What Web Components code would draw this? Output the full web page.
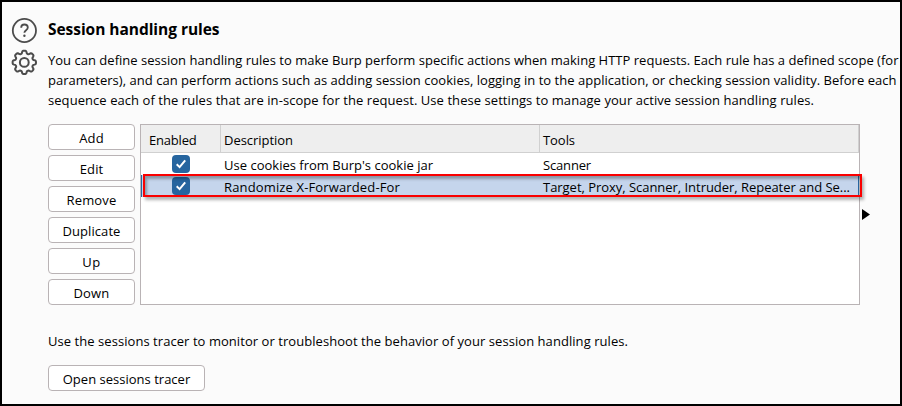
<!DOCTYPE html>
<html lang="en">
<head>
<meta charset="utf-8">
<title>Session handling rules</title>
<style>
html,body{margin:0;height:100%;overflow:hidden}
body{font-family:"Open Sans","Noto Sans",sans-serif;font-size:13px;color:#000}
</style>
</head>
<body>
<settings-panel></settings-panel>
<script>
function define(name, html, setup) {
  customElements.define(name, class extends HTMLElement {
    connectedCallback() {
      if (this.shadowRoot) return;
      const root = this.attachShadow({ mode: 'open' });
      const t = document.createElement('template');
      t.innerHTML = html;
      root.append(t.content.cloneNode(true));
      if (setup) setup(this, root);
    }
  });
}

/* One line of text, tracked so that it fills the width given in "w". */
define('text-line', `
<style>
:host{display:block;white-space:nowrap;line-height:20px}
span{display:inline-block;white-space:pre}
</style><span><slot></slot></span>`, (el, root) => {
  const span = root.querySelector('span');
  const w = +el.getAttribute('w');
  const n = el.textContent.length;
  const extra = (w - span.getBoundingClientRect().width) / n;
  span.style.letterSpacing = extra.toFixed(4) + 'px';
});

define('push-button', `
<style>
:host{display:flex;justify-content:center;box-sizing:border-box;height:26px;padding-top:3px;background:#fff;border:1px solid #b9b3b5;border-radius:4px}
</style><slot></slot>`);

define('check-box', `
<style>:host{display:block;width:18px;height:18px}svg{display:block}</style>
<svg width="18" height="18" viewBox="0 0 18 18"><rect width="18" height="18" rx="4" fill="#26659f"/><path d="M4.7 9.3 7.6 12.1 13.2 5.3" fill="none" stroke="#fff" stroke-width="2"/></svg>`);

define('help-icon', `
<style>:host{display:block;width:26px;height:26px}svg{display:block}</style>
<svg width="26" height="26" viewBox="0 0 26 26" fill="none" stroke="#4c4c4c"><circle cx="13.4" cy="12.5" r="11.6" stroke-width="1.8"/><path d="M10.2 9.8C10.2 7.6 11.5 6.5 13.4 6.5s3.4 1.2 3.4 3.1c0 2.7-3.4 2.6-3.4 5.2" stroke-width="1.8"/><circle cx="13.4" cy="17.8" r="1.2" fill="#4c4c4c" stroke="none"/></svg>`);

define('gear-icon', `
<style>:host{display:block;width:26px;height:26px}svg{display:block;overflow:visible}</style>
<svg width="26" height="26" viewBox="0 0 26 26" fill="none" stroke="#4c4c4c" stroke-width="2" stroke-linejoin="round"><path/><circle cx="13.3" cy="12.4" r="4.4"/></svg>`, (el, root) => {
  /* Eight rounded teeth: the radius swings between root and tip. */
  const pts = [];
  for (let d = 0; d < 360; d += 3) {
    const a = d * Math.PI / 180;
    const r = 10.3 + 1.35 * Math.tanh(2 * (Math.cos(8 * a) + 0.2)) / Math.tanh(2);
    pts.push((13.3 + r * Math.cos(a)).toFixed(2) + ' ' + (12.4 + r * Math.sin(a)).toFixed(2));
  }
  root.querySelector('path').setAttribute('d', 'M' + pts.join('L') + 'Z');
});

define('rule-row', `
<style>
:host{display:grid;grid-template-columns:80px 319px 1fr;height:22px;box-sizing:border-box;background:#fff}
:host([selected]){background:#c5d5ec;box-shadow:inset 1px 0 #26659f,inset -1px 0 #26659f}
.c{padding:2px 0 0 31px}
.t{padding:2px 0 0 3px}
</style>
<div class="c"><check-box></check-box></div>
<div class="t"><slot name="description"></slot></div>
<div class="t"><slot name="tools"></slot></div>`);

define('rules-table', `
<style>
:host{display:block;position:relative;box-sizing:border-box;width:720px;height:181px;background:#fff;border:1px solid #b9b3b5}
.head{display:grid;grid-template-columns:80px 319px 1fr;height:28px;box-sizing:border-box;background:#eee;border-bottom:1px solid #d0d0d0;width:718px}
.head div{border-right:1px solid #d0d0d0;padding:5px 0 0 3px;box-sizing:border-box}
.head div:first-child{padding-left:8px}
.mark{position:absolute;left:2px;top:49px;width:719px;height:23px;box-sizing:border-box;border:2px solid #fa0000;box-shadow:2px 3px 3px rgba(0,0,0,.3),inset 2px 3px 3px rgba(0,0,0,.3)}
</style>
<div class="head"><div><text-line w="47.5">Enabled</text-line></div><div><text-line w="69">Description</text-line></div><div><text-line w="32">Tools</text-line></div></div>
<slot></slot>
<div class="mark"></div>`);

define('settings-panel', `
<style>
:host{display:block;box-sizing:border-box;width:902px;height:406px;border:2px solid #000;background:#fbfbfb;overflow:hidden}
.page{display:grid;grid-template-columns:46px 1fr;padding-top:16px}
.icons{display:flex;flex-direction:column;gap:6px;padding-left:9px}
h1{margin:0;font-size:15.5px;font-weight:700;height:30px;padding-top:1px;box-sizing:border-box}
.intro{padding-top:2px;height:60px}
.rules{display:flex;margin-top:14px}
.buttons{display:flex;flex-direction:column;gap:5px;width:87px;margin-right:5px}
.arrow{width:8px;height:11px;margin:85px 0 0 2px}
.arrow svg{display:block}
.note{margin-top:26px}
.open{width:157px;margin-top:14px}
</style>
<div class="page">
<div class="icons"><help-icon></help-icon><gear-icon></gear-icon></div>
<div>
<h1><text-line w="171.5">Session handling rules</text-line></h1>
<div class="intro">
<text-line w="850.5">You can define session handling rules to make Burp perform specific actions when making HTTP requests. Each rule has a defined scope (for</text-line>
<text-line w="848.5">parameters), and can perform actions such as adding session cookies, logging in to the application, or checking session validity. Before each</text-line>
<text-line w="766">sequence each of the rules that are in-scope for the request. Use these settings to manage your active session handling rules.</text-line>
</div>
<div class="rules">
<div class="buttons">
<push-button><text-line w="24.5">Add</text-line></push-button>
<push-button><text-line w="23.5">Edit</text-line></push-button>
<push-button><text-line w="50">Remove</text-line></push-button>
<push-button><text-line w="58">Duplicate</text-line></push-button>
<push-button><text-line w="18.5">Up</text-line></push-button>
<push-button><text-line w="36">Down</text-line></push-button>
</div>
<rules-table>
<rule-row><text-line slot="description" w="209">Use cookies from Burp's cookie jar</text-line><text-line slot="tools" w="48">Scanner</text-line></rule-row>
<rule-row selected><text-line slot="description" w="176">Randomize X-Forwarded-For</text-line><text-line slot="tools" w="307">Target, Proxy, Scanner, Intruder, Repeater and Se...</text-line></rule-row>
</rules-table>
<div class="arrow"><svg width="8" height="11" viewBox="0 0 8 11"><path d="M0 0 8 5.5 0 11Z"/></svg></div>
</div>
<text-line class="note" w="580">Use the sessions tracer to monitor or troubleshoot the behavior of your session handling rules.</text-line>
<push-button class="open"><text-line w="127.5">Open sessions tracer</text-line></push-button>
</div>
</div>`);
</script>
</body>
</html>
